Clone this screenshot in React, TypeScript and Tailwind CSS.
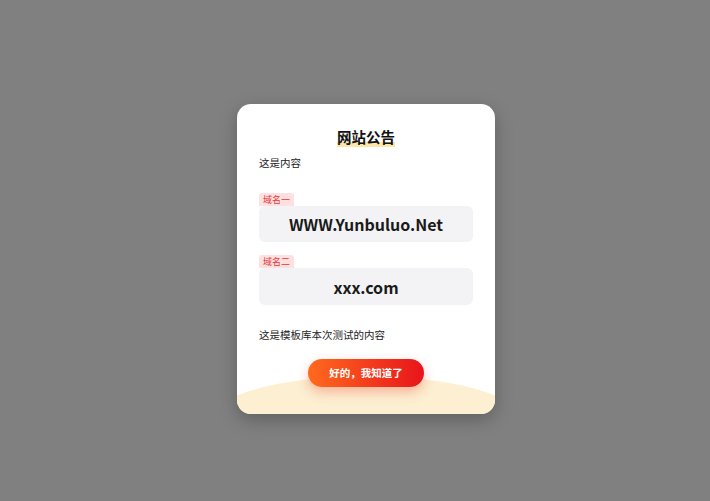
import React from "react";

const font = { fontFamily: '"Noto Sans CJK SC", "Noto Sans", sans-serif' };

function DomainBlock({ label, value, top, h }: { label: string; value: string; top: string; h: string }) {
  return (
    <div className={`${top} flex flex-col items-start`}>
      <div className="h-[13px] px-[4px] rounded-t-[3px] bg-[#fde0df] text-[#e23b3b] text-[9px] leading-[13px]">
        {label}
      </div>
      <div className={`${h} self-stretch rounded-[6px] bg-[#f3f3f5] flex items-center justify-center text-[16px] font-bold text-[#1a1a1a]`}>
        {value}
      </div>
    </div>
  );
}

export default function App() {
  return (
    <div className="w-[710px] h-[501px] bg-[#808080] pl-[237px] pt-[104px]" style={font}>
      <div className="relative w-[258px] h-[310px] bg-white rounded-[14px] overflow-hidden shadow-[0_6px_18px_rgba(0,0,0,0.25)] px-[22px] pt-[22px]">
        <div className="absolute left-[-31px] top-[272px] w-[320px] h-[96px] rounded-[50%] bg-[#fcefd2]" />
        <div className="relative">
          <div className="text-center leading-[20px]">
            <span className="text-[14.5px] font-bold text-[#111] bg-[linear-gradient(transparent_78%,#fbe7a8_78%)]">网站公告</span>
          </div>
          <div className="mt-[8px] text-[10.5px] leading-[16px] text-[#222]">这是内容</div>
          <DomainBlock label="域名一" value="WWW.Yunbuluo.Net" top="mt-[22px]" h="h-[36px]" />
          <DomainBlock label="域名二" value="xxx.com" top="mt-[13px]" h="h-[37px]" />
          <div className="mt-[22px] text-[10.5px] leading-[16px] text-[#222]">这是模板库本次测试的内容</div>
          <div className="mt-[16px] flex justify-center">
            <button className="w-[116px] h-[28px] rounded-full bg-[linear-gradient(90deg,#ff6a1e,#e8141c)] text-white text-[10.5px] font-bold shadow-[0_5px_12px_rgba(240,70,40,0.35)]">
              好的，我知道了
            </button>
          </div>
        </div>
      </div>
    </div>
  );
}
